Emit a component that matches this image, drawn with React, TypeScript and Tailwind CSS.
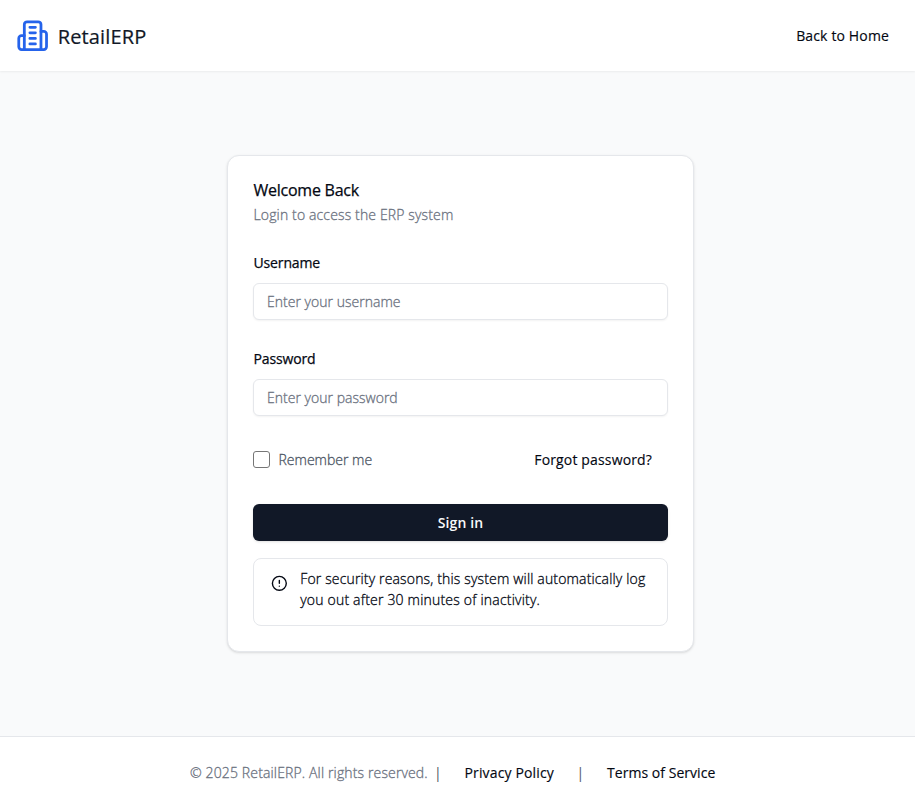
import React from "react";

function BuildingIcon() {
  return (
    <svg
      className="h-[33.3px] w-[33.3px] shrink-0"
      viewBox="0 0 24 24"
      fill="none"
      stroke="#2563eb"
      strokeWidth="2"
      strokeLinecap="round"
      strokeLinejoin="round"
    >
      <path d="M6 22V4a2 2 0 0 1 2-2h8a2 2 0 0 1 2 2v18Z" />
      <path d="M6 12H4a2 2 0 0 0-2 2v6a2 2 0 0 0 2 2h2" />
      <path d="M18 9h2a2 2 0 0 1 2 2v9a2 2 0 0 1-2 2h-2" />
      <path d="M10 6h4M10 10h4M10 14h4M10 18h4" />
    </svg>
  );
}

function AlertIcon() {
  return (
    <svg
      className="mt-[7px] h-[16.7px] w-[16.7px] shrink-0"
      viewBox="0 0 24 24"
      fill="none"
      stroke="#030712"
      strokeWidth="2"
      strokeLinecap="round"
      strokeLinejoin="round"
    >
      <circle cx="12" cy="12" r="10" />
      <path d="M12 8v4M12 16h.01" />
    </svg>
  );
}

const light = "font-light [-webkit-text-stroke:0.3px]";
const medium = "font-normal [-webkit-text-stroke:0.25px]";
const link = "font-normal [-webkit-text-stroke:0.15px] whitespace-nowrap text-[#030712]";
const field =
  "block h-[37px] w-full rounded-[6px] border border-[#e5e7eb] bg-white px-[13px] text-[14px] tracking-[0.02px] shadow-xs outline-none placeholder:text-[#6b7280] placeholder:opacity-100 " + light;

export default function App() {
  return (
    <div className="flex h-[806px] w-full flex-col overflow-hidden bg-[#f9fafb] font-['Open_Sans','Noto_Sans',sans-serif] text-[14px] leading-[21px] text-[#030712]">
      <header className="flex h-[71px] shrink-0 items-center justify-between bg-white pr-[26px] pl-4 shadow-[0_1px_2px_0_rgba(0,0,0,0.06)]">
        <div className="flex items-center gap-[8.5px]">
          <BuildingIcon />
          <span className="pt-[3px] text-[20px] leading-7 tracking-[0.12px] whitespace-nowrap text-[#111827] [-webkit-text-stroke:0.2px]">RetailERP</span>
        </div>
        <a className={link + " tracking-[0.14px]"}>Back to Home</a>
      </header>

      <main className="flex flex-1 justify-center pt-[84px] pl-[6px]">
        <section className="h-[497px] w-[467px] rounded-[12px] border border-[#e5e7eb] bg-white px-[25px] pt-[23px] shadow">
          <h1 className={"h-[22px] pl-[0.5px] text-[16px] leading-[22px] tracking-[-0.25px] " + medium}>Welcome Back</h1>
          <p className={"mt-[3px] pl-[0.5px] tracking-[0.14px] text-[#6b7280] " + light}>Login to access the ERP system</p>

          <form className="mt-[27px]">
            <label className={"block pl-[0.5px] tracking-[-0.14px] " + medium}>Username</label>
            <input className={field + " mt-[10px]"} placeholder="Enter your username" />
            <label className={"mt-[28px] block pl-[0.5px] tracking-[-0.14px] " + medium}>Password</label>
            <input className={field + " mt-[10px]"} placeholder="Enter your password" />

            <div className="mt-[33px] flex h-[21px] items-center justify-between pr-[16px]">
              <div className="flex items-center gap-[8.5px]">
                <span className="h-[17px] w-[17px] rounded-[3px] border border-[#767676] bg-white" />
                <span className={"tracking-[0px] text-[#4b5563] " + light}>Remember me</span>
              </div>
              <a className={link + " tracking-[0.15px]"}>Forgot password?</a>
            </div>

            <button
              type="button"
              className="mt-[34px] block h-[37px] w-full rounded-[6px] bg-[#111827] font-semibold tracking-[0.1px] text-[#f9fafb] shadow"
            >
              Sign in
            </button>
          </form>

          <div className="mt-[17px] flex h-[68px] gap-[12.5px] rounded-[8px] border border-[#e5e7eb] pt-[9px] pl-[17px]">
            <AlertIcon />
            <p className={"tracking-[0.16px] whitespace-nowrap " + light}>
              For security reasons, this system will automatically log
              <br />
              <span className="tracking-[0.2px]">you out after 30 minutes of inactivity.</span>
            </p>
          </div>
        </section>
      </main>

      <footer className="flex h-[70px] shrink-0 items-center border-t border-[#e5e7eb] bg-white pt-[2px] pl-[190px] whitespace-nowrap text-[#6b7280]">
        <span className={"w-[244px] tracking-[0.14px] " + light}>© 2025 RetailERP. All rights reserved.</span>
        <span className="w-[30.5px] text-[#4b5563]">|</span>
        <a className={link + " w-[112px] tracking-[0.14px]"}>Privacy Policy</a>
        <span className="w-[30.5px] text-[#4b5563]">|</span>
        <a className={link + " tracking-[0.04px]"}>Terms of Service</a>
      </footer>
    </div>
  );
}
